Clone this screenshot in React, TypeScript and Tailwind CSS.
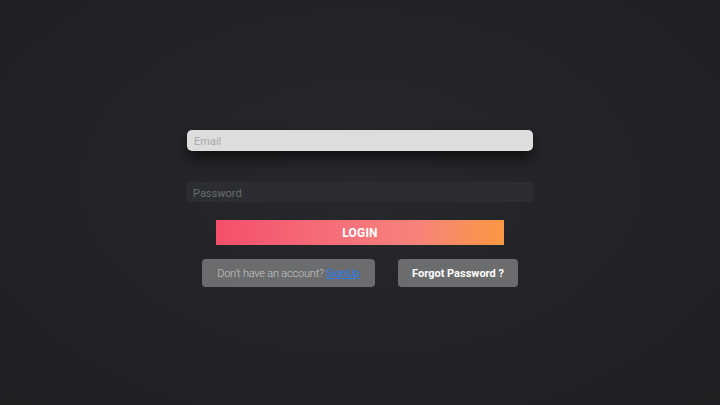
import React from "react";

export default function App() {
  return (
    <div
      className="w-[720px] h-[405px] flex flex-col items-center pt-[130px] bg-[radial-gradient(ellipse_at_50%_45%,#26282b_0%,#222326_55%,#1e1f21_100%)]"
      style={{ fontFamily: "Roboto, 'Liberation Sans', sans-serif" }}
    >
      <div className="w-[346px] h-[21px] rounded-[5px] bg-[#dcdddc] shadow-[0_8px_14px_rgba(0,0,0,0.55)] flex items-center px-[7px] pt-[2px]">
        <span className="text-[11px] text-[#a9aaab] leading-none">Email</span>
      </div>
      <div className="mt-[31px] w-[348px] h-[20px] rounded-[4px] bg-[#2b2d30] flex items-center px-[7px] pt-[2px]">
        <span className="text-[11px] text-[#6b6d70] leading-none">Password</span>
      </div>
      <div className="mt-[18px] w-[288px] h-[25px] bg-[linear-gradient(90deg,#f44f6b_0%,#f6727b_45%,#f7837a_70%,#fb9843_100%)] flex items-center justify-center pt-[1px]">
        <span className="text-[12px] font-bold text-white leading-none tracking-[0.2px]">LOGIN</span>
      </div>
      <div className="mt-[14px] flex gap-[23px]">
        <div className="w-[173px] h-[28px] rounded-[4px] bg-[#6b6c6d] flex items-center justify-center pt-[1px]">
          <span className="text-[11px] text-[#c8c8c8] leading-none font-light tracking-[-0.2px] whitespace-pre">
            {"Don't have an account? "}
            <span className="text-[#2c7df0] underline font-normal">SignUp</span>
          </span>
        </div>
        <div className="w-[120px] h-[28px] rounded-[4px] bg-[#6b6c6d] flex items-center justify-center pt-[1px]">
          <span className="text-[11px] font-bold text-white leading-none">Forgot Password ?</span>
        </div>
      </div>
    </div>
  );
}
